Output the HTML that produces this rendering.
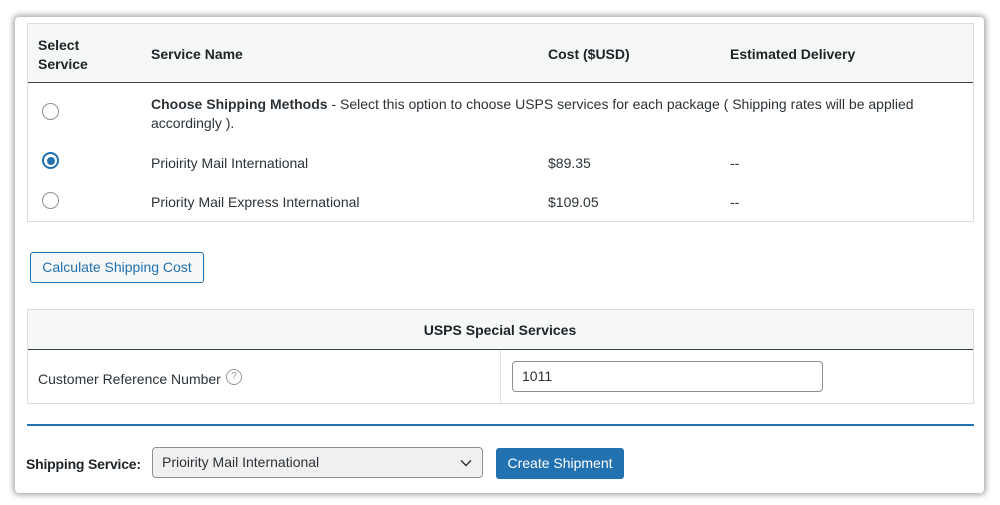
<!DOCTYPE html><html><head><style>
body{margin:0;width:1000px;height:505px;background:#fff;font-family:"Liberation Sans",sans-serif;font-size:14px;color:#2c3338;position:relative;overflow:hidden}
.card{position:absolute;left:15px;top:17px;width:969px;height:476px;background:#fff;border-radius:4px;box-shadow:0 0 6px 2px rgba(0,0,0,.35)}
.a{position:absolute}
.t{position:absolute;border:1px solid #dcdcde;background:#fff;box-sizing:border-box}
.b{font-weight:bold;color:#1d2327}
.r{position:absolute;width:17px;height:17px;border:1px solid #8c8f94;border-radius:50%;box-sizing:border-box;background:#fff}
</style></head><body>
<div class="card"></div>
<div class="t" style="left:27px;top:23px;width:947px;height:199px"></div>
<div class="a" style="left:28px;top:24px;width:945px;height:58px;background:#f6f7f7;border-bottom:1px solid #3c434a"></div>
<div class="a b" style="left:38px;top:36px;line-height:19px">Select<br>Service</div>
<div class="a b" style="left:151px;top:46px">Service Name</div>
<div class="a b" style="left:548px;top:46px">Cost ($USD)</div>
<div class="a b" style="left:730px;top:46px">Estimated Delivery</div>
<div class="r" style="left:42px;top:103px"></div>
<div class="a" style="left:151px;top:95px;width:800px;line-height:19px"><b>Choose Shipping Methods</b> - Select this option to choose USPS services for each package ( Shipping rates will be applied accordingly ).</div>
<div class="r" style="left:42px;top:152px;border:2px solid #2271b1"><div class="a" style="left:2.5px;top:2.5px;width:8px;height:8px;border-radius:50%;background:#2271b1"></div></div>
<div class="a" style="left:151px;top:155px">Prioirity Mail International</div>
<div class="a" style="left:548px;top:155px">$89.35</div>
<div class="a" style="left:730px;top:155px">--</div>
<div class="r" style="left:42px;top:192px"></div>
<div class="a" style="left:151px;top:194px">Priority Mail Express International</div>
<div class="a" style="left:548px;top:194px">$109.05</div>
<div class="a" style="left:730px;top:194px">--</div>
<div class="a" style="left:30px;top:252px;width:172px;height:29px;border:1px solid #2271b1;border-radius:3px;background:#f6f7f7;color:#2271b1;text-align:center;line-height:29px">Calculate Shipping Cost</div>
<div class="t" style="left:27px;top:309px;width:947px;height:95px"></div>
<div class="a" style="left:28px;top:310px;width:945px;height:39px;background:#f6f7f7;border-bottom:1px solid #3c434a"></div>
<div class="a b" style="left:0;width:1000px;text-align:center;top:322px">USPS Special Services</div>
<div class="a" style="left:500px;top:350px;width:1px;height:53px;background:#e0e0e0"></div>
<div class="a" style="left:38px;top:371px">Customer Reference Number</div>
<div class="a" style="left:226px;top:369px;width:14px;height:14px;border:1px solid #999;border-radius:50%;font-size:10px;line-height:14px;text-align:center;color:#999">?</div>
<div class="a" style="left:512px;top:361px;width:311px;height:31px;border:1px solid #8c8f94;border-radius:4px;box-sizing:border-box;padding-left:9px;line-height:29px;color:#2c3338">1011</div>
<div class="a" style="left:27px;top:424px;width:947px;height:2px;background:#2271b1"></div>
<div class="a b" style="left:26px;top:456px;letter-spacing:-0.2px">Shipping Service:</div>
<div class="a" style="left:152px;top:447px;width:331px;height:31px;border:1px solid #8c8f94;border-radius:4px;box-sizing:border-box;background:#f0f0f1;padding-left:9px;line-height:29px">Prioirity Mail International
<svg class="a" style="right:10px;top:11px" width="12" height="8" viewBox="0 0 12 8"><path d="M1 1.5l5 5 5-5" fill="none" stroke="#2c3338" stroke-width="1.5"/></svg></div>
<div class="a" style="left:496px;top:448px;width:128px;height:31px;background:#2271b1;border-radius:3px;color:#fff;text-align:center;line-height:31px">Create Shipment</div>
</body></html>
